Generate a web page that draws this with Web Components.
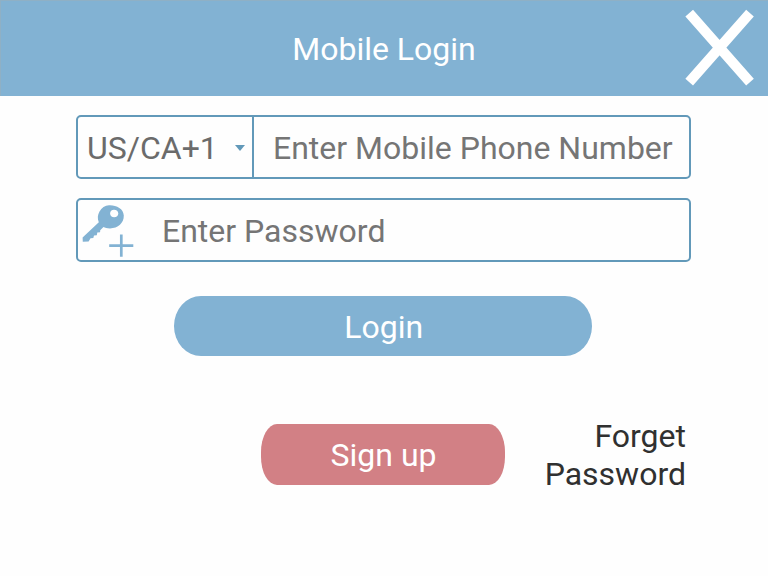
<!DOCTYPE html>
<html lang="en">
<head>
<meta charset="utf-8">
<title>Mobile Login</title>
<style>
html, body { margin: 0; height: 100%; background: #fefefe; overflow: hidden; }
body { font: 32px/38px Roboto, "Liberation Sans", sans-serif; color: #303030; }
</style>
</head>
<body>
<login-page></login-page>
<script>
const define = (name, html) => {
  const template = document.createElement('template');
  template.innerHTML = html;
  customElements.define(name, class extends HTMLElement {
    constructor() {
      super();
      this.attachShadow({ mode: 'open' }).append(template.content.cloneNode(true));
    }
  });
};

define('close-icon', `
  <style>:host { display: block; width: 100px; height: 96px; } svg { display: block; }</style>
  <svg width="100" height="96" viewBox="0 0 100 96"><path d="M21.2 13.2L82 82.2M82 13.2L21.2 82.2" stroke="#fff" stroke-width="10.2" fill="none"/></svg>`);

define('key-icon', `
  <style>:host { display: block; width: 56px; height: 60px; } svg { display: block; }</style>
  <svg width="56" height="60" viewBox="0 0 56 60">
    <path fill="#82b2d3" fill-rule="evenodd" d="M31 5.300C38 4.900 45.500 8.600 45.800 15.500C46 23 40 28.300 32 28.400C29 28.400 27 27.600 25.500 27L22.200 30.200L22.100 32.300L19.300 32.500L18.800 35.300L16 35.400L15.300 38L12.500 38.200L10.600 41.500L4.800 41.800L4.600 37.600L20.800 22.300C19.300 18.500 19.500 15 21.500 11.500C23.500 7.800 27 5.600 31 5.300ZM36 9.800C33.600 9.800 32.100 11.500 32.100 13.500C32.100 15.600 33.800 17.200 36.100 17.200C38.600 17.200 40.300 15.500 40.300 13.400C40.300 11.400 38.500 9.800 36 9.800Z"/>
    <path d="M31.200 45.700H55.300M43.300 34.400V56.700" stroke="#82b2d3" stroke-width="2.700"/>
  </svg>`);

define('title-bar', `
  <style>
    :host { display: grid; grid-template-columns: 100px 1fr 100px; align-items: center; box-sizing: border-box; height: 96px; background: #82b2d3; color: #fff; box-shadow: inset 1px 1px #8fb0c5; }
    span { grid-column: 2; text-align: center; padding-top: 2px; }
  </style>
  <span><slot></slot></span><close-icon></close-icon>`);

define('country-picker', `
  <style>
    :host { display: flex; align-items: center; justify-content: space-between; box-sizing: border-box; width: 176px; height: 100%; padding: 2px 7px 0 9px; border-right: 2px solid #6299b9; color: #6b6b6b; }
    span { white-space: nowrap; }
  </style>
  <span><slot></slot></span>
  <svg width="10" height="6" viewBox="0 0 10 6"><path d="M0 0H10L5 6Z" fill="#6299b9"/></svg>`);

define('input-field', `
  <style>
    :host { display: flex; align-items: center; box-sizing: border-box; width: 615px; height: 64px; border: 2px solid #6299b9; border-radius: 5px; color: #757575; }
    .hint { padding-left: var(--hint-indent, 0); padding-top: 2px; white-space: nowrap; }
  </style>
  <slot name="lead"></slot><span class="hint"><slot></slot></span>`);

define('action-button', `
  <style>
    :host { display: flex; align-items: center; justify-content: center; box-sizing: border-box; background: var(--fill); color: #fff; width: var(--width); height: var(--height); border-radius: var(--radius); padding-top: var(--drop, 2px); padding-left: 1px; }
  </style>
  <slot></slot>`);

define('login-page', `
  <style>
    :host { display: block; height: 576px; box-sizing: border-box; }
    main { display: grid; padding-left: 76px; padding-top: 19px; row-gap: 19px; justify-items: start; }
    .phone { --hint-indent: 19px; }
    .password { --hint-indent: 28px; }
    .login { --fill: #82b2d3; --width: 417.5px; --height: 60px; --radius: 27px / 30px; margin: 14.5px 0 0 98.4px; }
    .more { display: flex; align-items: flex-start; margin: 49px 0 0 185px; }
    .signup { --fill: #d28085; --width: 244px; --height: 61px; --radius: 16px / 28px; --drop: 1px; }
    .forget { text-align: right; width: 181px; margin-top: -6.7px; }
  </style>
  <title-bar>Mobile Login</title-bar>
  <main>
    <input-field class="phone"><country-picker slot="lead">US/CA+1</country-picker>Enter Mobile Phone Number</input-field>
    <input-field class="password"><key-icon slot="lead"></key-icon>Enter Password</input-field>
    <action-button class="login">Login</action-button>
    <div class="more">
      <action-button class="signup">Sign up</action-button>
      <div class="forget">Forget<br>Password</div>
    </div>
  </main>`);
</script>
</body>
</html>
